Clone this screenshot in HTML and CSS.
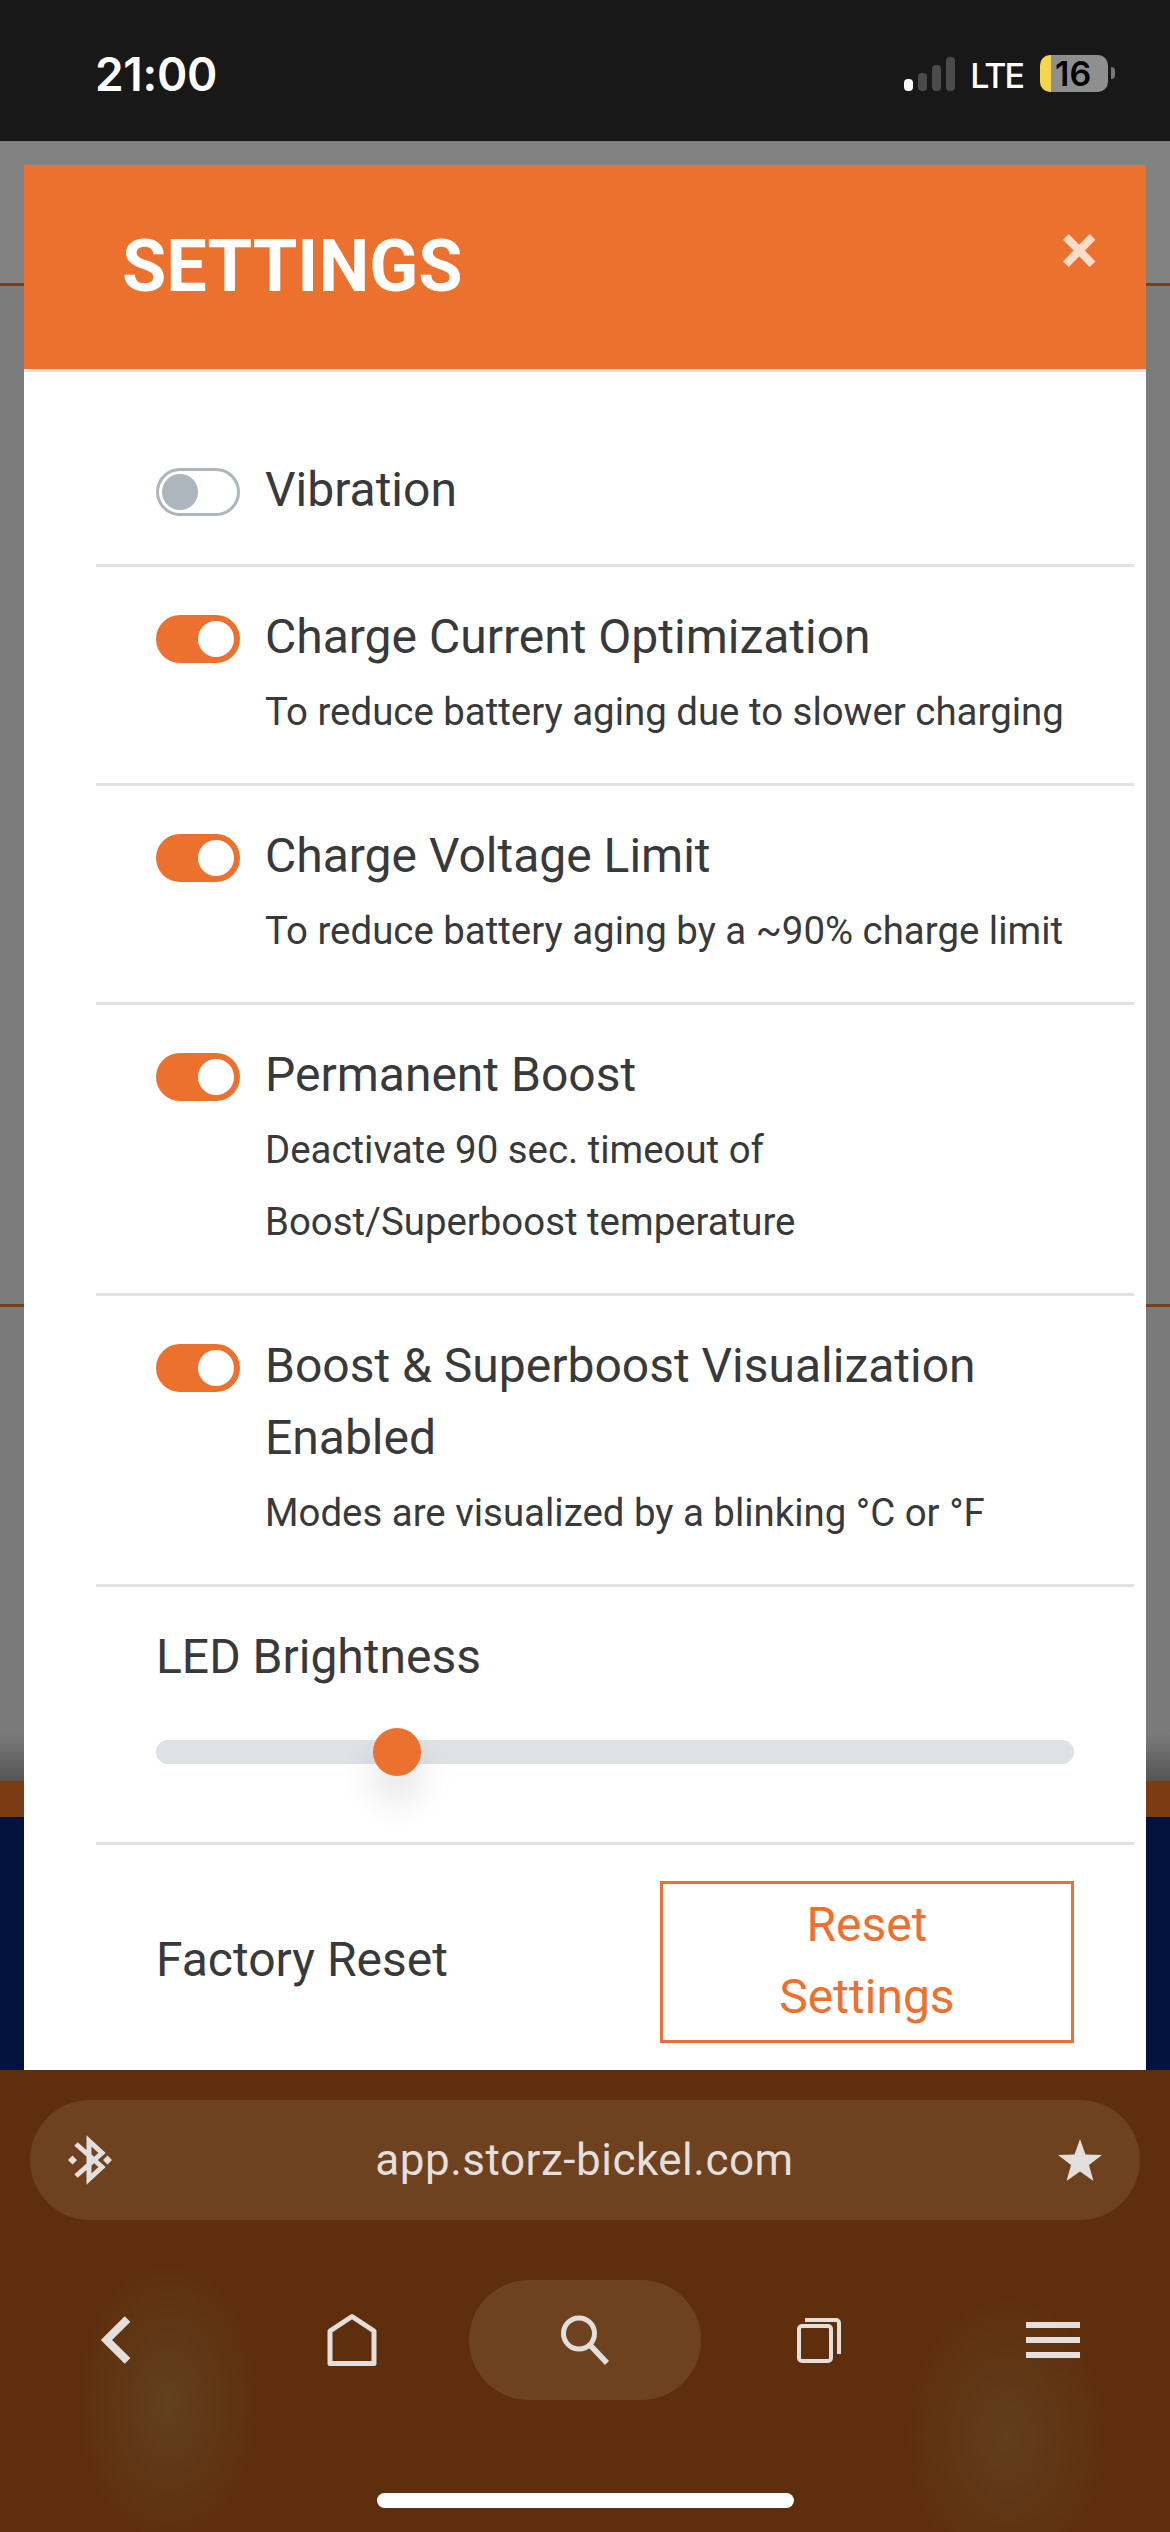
FILE: index.html
```html
<!DOCTYPE html>
<html lang="en">
<head>
    <meta charset="UTF-8">
    <meta name="viewport" content="width=device-width, initial-scale=1.0">
    <title>Settings</title>
    <link rel="stylesheet" href="styles.css">
</head>
<body>
    <div class="phone">
        <div class="status-bar">
            <span class="clock">21:00</span>
            <div class="status-right">
                <div class="signal">
                    <i class="bar bar-1"></i>
                    <i class="bar bar-2"></i>
                    <i class="bar bar-3"></i>
                    <i class="bar bar-4"></i>
                </div>
                <span class="network">LTE</span>
                <div class="battery"><span class="battery-level">16</span></div>
                <i class="battery-nub"></i>
            </div>
        </div>

        <div class="web-view">
            <div class="back-section back-top"></div>
            <div class="back-section back-middle"></div>
            <div class="back-section back-fade"></div>
            <div class="back-band"></div>
            <div class="back-navy"></div>

            <div class="modal">
                <div class="modal-header">
                    <h1>SETTINGS</h1>
                    <span class="close">×</span>
                </div>
                <div class="modal-body">
                    <div class="row row-first">
                        <span class="switch switch-off"></span>
                        <div class="row-text">
                            <div class="row-title">Vibration</div>
                        </div>
                    </div>
                    <div class="row">
                        <span class="switch"></span>
                        <div class="row-text">
                            <div class="row-title">Charge Current Optimization</div>
                            <div class="row-note">To reduce battery aging due to slower charging</div>
                        </div>
                    </div>
                    <div class="row">
                        <span class="switch"></span>
                        <div class="row-text">
                            <div class="row-title">Charge Voltage Limit</div>
                            <div class="row-note">To reduce battery aging by a ~90% charge limit</div>
                        </div>
                    </div>
                    <div class="row">
                        <span class="switch"></span>
                        <div class="row-text">
                            <div class="row-title">Permanent Boost</div>
                            <div class="row-note">Deactivate 90 sec. timeout of<br>Boost/Superboost temperature</div>
                        </div>
                    </div>
                    <div class="row">
                        <span class="switch"></span>
                        <div class="row-text">
                            <div class="row-title">Boost &amp; Superboost Visualization Enabled</div>
                            <div class="row-note">Modes are visualized by a blinking °C or °F</div>
                        </div>
                    </div>
                    <div class="row row-slider">
                        <div class="row-title">LED Brightness</div>
                        <div class="slider"><span class="slider-thumb"></span></div>
                    </div>
                    <div class="row row-reset">
                        <div class="row-title">Factory Reset</div>
                        <button type="button" class="reset-btn">Reset Settings</button>
                    </div>
                </div>
            </div>
        </div>

        <div class="browser-bar">
            <div class="url-bar">
                <svg class="icon-bt" width="44" height="50" viewBox="0 0 44 50">
                    <path d="M8 9 L34 32 L21 44 V6 L34 18 L8 41" fill="none" stroke="#e2dfdc" stroke-width="5"/>
                    <path d="M4.500 20.500 L9 25 L4.500 29.500 L0 25 Z M39.500 20.500 L44 25 L39.500 29.500 L35 25 Z" fill="#e2dfdc"/>
                </svg>
                <span class="url">app.storz-bickel.com</span>
                <svg class="icon-star" width="46" height="42" viewBox="0 0 46 42">
                    <path d="M23 0 L28.500 15.500 L45 16 L32 26 L36.500 42 L23 32.500 L9.500 42 L14 26 L1 16 L17.500 15.500 Z" fill="#e2dfdc"/>
                </svg>
            </div>
            <div class="nav-bar">
                <svg width="40" height="60" viewBox="0 0 40 60">
                    <path d="M37.500 9 L16.500 30 L37.500 51" fill="none" stroke="#e2dfdc" stroke-width="8"/>
                </svg>
                <svg class="nav-home" width="56" height="60" viewBox="0 0 56 60">
                    <path d="M5 21 L27 6.500 L49 21 V53.500 H5 Z" fill="none" stroke="#e2dfdc" stroke-width="5" stroke-linejoin="round"/>
                </svg>
                <div class="search-pill">
                    <svg width="56" height="60" viewBox="0 0 56 60">
                        <circle cx="22" cy="23.500" r="15.500" fill="none" stroke="#e2dfdc" stroke-width="5"/>
                        <path d="M33 35 L50 53" stroke="#e2dfdc" stroke-width="5.500"/>
                    </svg>
                </div>
                <svg class="nav-tabs" width="56" height="60" viewBox="0 0 56 60">
                    <rect x="4" y="16" width="32" height="35" rx="3" fill="none" stroke="#e2dfdc" stroke-width="4"/>
                    <path d="M10 10 H41 A3 3 0 0 1 44 13 V44" fill="none" stroke="#e2dfdc" stroke-width="4"/>
                </svg>
                <div class="menu-icon"><i></i><i></i><i></i></div>
            </div>
            <div class="home-indicator"></div>
        </div>
    </div>
</body>
</html>
```

FILE: styles.css
```css
body {
    margin: 0;
    padding: 0;
    font-family: Roboto, "Liberation Sans", sans-serif;
}

.phone {
    width: 1170px;
    height: 2532px;
    display: flex;
    flex-direction: column;
    overflow: hidden;
}

/* status bar */
.status-bar {
    height: 141px;
    flex: none;
    background-color: #181818;
    display: flex;
    justify-content: space-between;
    padding: 50px 55px 0 95px;
    box-sizing: border-box;
    color: white;
}
.clock {
    font-family: Inter, sans-serif;
    font-size: 46px;
    font-weight: 600;
    line-height: 48px;
    letter-spacing: -0.3px;
}
.status-right {
    display: flex;
    align-items: flex-start;
    height: 50px;
}
.signal {
    display: flex;
    align-items: flex-end;
    gap: 5px;
    height: 34px;
    margin-top: 7px;
}
.bar {
    width: 9px;
    border-radius: 4px;
    background-color: #4b4b4b;
}
.bar-1 { height: 12px; background-color: white; }
.bar-2 { height: 18px; }
.bar-3 { height: 26px; }
.bar-4 { height: 34px; }
.network {
    font-family: Inter, sans-serif;
    font-size: 34px;
    font-weight: 500;
    line-height: 42px;
    letter-spacing: -2px;
    margin: 5px 17px 0 15px;
}
.battery {
    width: 68px;
    height: 37px;
    margin-top: 5px;
    border-radius: 10px;
    background: linear-gradient(to right, #f6d44e 11px, #8f8f8f 11px);
    color: black;
    font-family: Inter, sans-serif;
    font-size: 34px;
    font-weight: 600;
    line-height: 37px;
    padding-left: 15px;
    box-sizing: border-box;
}
.battery-nub {
    width: 4px;
    height: 12px;
    margin: 17px 0 0 3px;
    border-radius: 0 6px 6px 0;
    background-color: #777;
}

/* what is behind the modal */
.web-view {
    flex: 1;
    position: relative;
    display: flex;
    flex-direction: column;
    background-color: #808080;
}
.back-section {
    box-sizing: border-box;
    border-bottom: 3px solid #7b3f16;
}
.back-top {
    height: 145px;
    background-color: #828282;
}
.back-middle {
    height: 1021px;
    background-color: #7c7c7c;
}
.back-fade {
    height: 474px;
    border-bottom: 0;
    background: linear-gradient(to bottom, #7a7a7a 90%, #555 100%);
}
.back-band {
    height: 36px;
    background-color: #7b3b13;
}
.back-navy {
    flex: 1;
    background-color: #00123d;
}

.modal {
    position: absolute;
    left: 24px;
    right: 24px;
    top: 24px;
    bottom: 0;
    background-color: white;
    overflow: hidden;
}
.modal-header {
    height: 204px;
    background-color: #ec712e;
    border-bottom: 3px solid #e6e0d8;
    display: flex;
    justify-content: space-between;
    padding: 0 48px 0 98px;
}
h1 {
    margin: 54px 0 0 0;
    color: white;
    font-size: 72px;
    font-weight: 700;
    line-height: 96px;
}
.close {
    color: #fbdcc9;
    font-size: 70px;
    font-weight: 700;
    line-height: 70px;
    margin-top: 50px;
}

.modal-body {
    padding: 0 12px 0 72px;
    color: #38393b;
}
.row {
    display: flex;
    gap: 25px;
    padding: 34px 0 35px 60px;
    border-bottom: 3px solid #e2e2e2;
}
.row-first {
    padding-top: 82px;
    padding-bottom: 38px;
}
.row-title {
    font-size: 48px;
    line-height: 72px;
}
.row-note {
    font-size: 38.4px;
    line-height: 72px;
    margin-top: 3px;
}
.row-text {
    flex: 1;
    padding-right: 60px;
}

.switch {
    flex: none;
    width: 84px;
    height: 48px;
    margin-top: 14px;
    border-radius: 24px;
    background-color: #ec712e;
    display: flex;
    align-items: center;
    justify-content: flex-end;
    padding: 0 6px;
    box-sizing: border-box;
}
.switch::after {
    content: "";
    width: 36px;
    height: 36px;
    border-radius: 50%;
    background-color: white;
}
.switch-off {
    background-color: white;
    border: 3px solid #adb5bd;
    justify-content: flex-start;
    padding: 0 3px;
}
.switch-off::after {
    background-color: #adb5bd;
}

.row-slider {
    display: block;
}
.slider {
    position: relative;
    width: 918px;
    height: 24px;
    margin-top: 47px;
    margin-bottom: 43px;
    border-radius: 12px;
    background-color: #dee2e6;
}
.slider-thumb {
    position: absolute;
    left: 217px;
    top: -12px;
    width: 48px;
    height: 48px;
    border-radius: 50%;
    background-color: #ec712e;
    box-shadow: 0 24px 36px rgba(0, 0, 0, 0.12);
}

.row-reset {
    border-bottom: 0;
    padding: 36px 60px 0 60px;
    justify-content: space-between;
    align-items: center;
}
.row-reset .row-title {
    margin-bottom: 4px;
}
.reset-btn {
    width: 414px;
    height: 162px;
    border: 3px solid #e2733a;
    background-color: white;
    color: #ec712e;
    font-family: inherit;
    font-size: 48px;
    line-height: 72px;
    padding: 0 80px 3px 80px;
}

/* browser toolbar */
.browser-bar {
    height: 462px;
    flex: none;
    position: relative;
    background-color: #5f2f0d;
    background-image:
        radial-gradient(ellipse 90px 140px at 168px 333px, rgba(100, 85, 55, 0.45), transparent),
        radial-gradient(ellipse 100px 140px at 1007px 367px, rgba(100, 85, 55, 0.4), transparent);
    box-sizing: border-box;
    padding-top: 30px;
}
.url-bar {
    height: 120px;
    margin: 0 30px;
    border-radius: 60px;
    background-color: #6e421e;
    display: flex;
    align-items: center;
    justify-content: space-between;
    padding: 0 37px 0 38px;
    color: #e2dfdc;
}
.url {
    font-size: 44px;
    letter-spacing: 0.5px;
}
.nav-bar {
    display: flex;
    align-items: center;
    margin-top: 60px;
    height: 120px;
    padding-left: 90px;
}
.nav-home { margin-left: 195px; }
.nav-tabs { margin-left: 94px; }
.search-pill {
    width: 232px;
    height: 120px;
    margin-left: 88px;
    border-radius: 60px;
    background-color: #6e421e;
    display: flex;
    align-items: center;
    justify-content: center;
}
.menu-icon {
    width: 54px;
    margin-left: 175px;
    display: flex;
    flex-direction: column;
    gap: 9px;
}
.menu-icon i {
    display: block;
    height: 6px;
    background-color: #e2dfdc;
}
.home-indicator {
    position: absolute;
    left: 377px;
    bottom: 24px;
    width: 417px;
    height: 15px;
    border-radius: 8px;
    background-color: white;
}
```
